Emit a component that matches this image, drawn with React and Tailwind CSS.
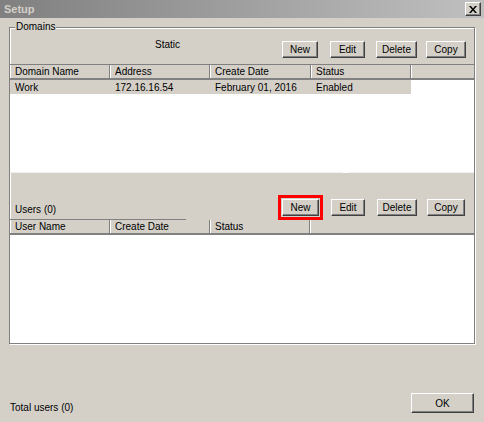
// Диалог "Setup": домены и пользователи, классический вид Windows.
const domainCols = [
  { label: 'Domain Name', w: 'w-[100px]' },
  { label: 'Address', w: 'w-[100px]' },
  { label: 'Create Date', w: 'w-[101px]' },
  { label: 'Status', w: 'w-[100px]' },
]

const userCols = [
  { label: 'User Name', w: 'w-[100px]' },
  { label: 'Create Date', w: 'w-[100px]' },
  { label: 'Status', w: 'w-[100px]' },
]

const domainRow = ['Work', '172.16.16.54', 'February 01, 2016', 'Enabled']

export default function App() {
  return (
    <div
      className="flex h-[422px] w-[484px] flex-col bg-[#d4d0c8] text-[10px] text-black"
      style={{ fontFamily: '"Liberation Sans", Arial, sans-serif' }}
    >
      <div className="flex h-[18px] shrink-0 items-center justify-between bg-gradient-to-r from-[#808080] to-[#c0c0c0] pl-[4px] pr-[3px]">
        <span className="text-[11px] font-bold text-[#d4d0c8]">Setup</span>
        <button className="flex h-[14px] w-[16px] items-center justify-center border border-t-white border-l-white border-r-[#404040] border-b-[#404040] bg-[#d4d0c8] shadow-[inset_-1px_-1px_0_#808080]">
          <svg width="8" height="7" viewBox="0 0 8 7">
            <path d="M0 0h2l2 2.5L6 0h2L5 3.5 8 7H6L4 4.5 2 7H0l3-3.5z" fill="#000" />
          </svg>
        </button>
      </div>

      <div className="flex flex-1 flex-col px-[9px] pt-[9px]">
        <div className="relative h-[317px] border border-[#808080] shadow-[1px_1px_0_#fff,inset_1px_1px_0_#fff]">
          <span className="absolute top-[-7px] left-[5px] bg-[#d4d0c8] px-[1px] leading-[12px]">
            Domains
          </span>

          <div className="flex h-[35px] items-end pb-[5px]">
            <span className="mb-[6px] ml-[145px] w-[120px]">Static</span>
            <div className="ml-[7px] flex gap-[12px]">
              <Btn w="w-[36px]">New</Btn>
              <Btn w="w-[35px]">Edit</Btn>
              <div className="ml-[-1px]">
                <Btn w="w-[41px]">Delete</Btn>
              </div>
              <div className="ml-[-3px]">
                <Btn w="w-[40px]">Copy</Btn>
              </div>
            </div>
          </div>

          <div className="mt-[1px] flex h-[108px] flex-col border-t border-[#808080] bg-white">
            <Header cols={domainCols} />
            <div className="flex h-[14px] w-[401px] items-center bg-[#d4d0c8]">
              {domainRow.map((v, i) => (
                <span key={v} className={`${domainCols[i].w} pl-[5px]`}>
                  {v}
                </span>
              ))}
            </div>
          </div>

          <div className="relative flex h-[48px] items-end border-t border-[#f0f0f0]">
            <span className="absolute top-[-2px] left-[332px] h-[2px] w-[6px] bg-white" />
            <div className="w-[176px] border-b border-[#808080] pb-[2px] pl-[5px]">Users (0)</div>
            <div className="mb-[4px] ml-[96px] flex gap-[12px]">
              <div className="outline outline-[3px] outline-offset-[1px] outline-[#ff0000]">
                <Btn w="w-[37px]">New</Btn>
              </div>
              <Btn w="w-[34px]">Edit</Btn>
              <Btn w="w-[40px]">Delete</Btn>
              <div className="ml-[-2px]">
                <Btn w="w-[38px]">Copy</Btn>
              </div>
            </div>
          </div>

          <div className="flex h-[123px] flex-col bg-white">
            <Header cols={userCols} />
          </div>
        </div>

        <div className="mt-auto flex items-end justify-between pb-[9px]">
          <span className="pl-[1px] leading-[10px]">Total users (0)</span>
          <button className="mr-[1px] h-[20px] w-[63px] border border-t-white border-l-white border-r-[#404040] border-b-[#404040] bg-[#d4d0c8] shadow-[inset_-1px_-1px_0_#808080]">
            OK
          </button>
        </div>
      </div>
    </div>
  )
}

function Header({ cols }) {
  return (
    <div className="flex h-[15px] shrink-0 border-b-2 border-[#808080] bg-[#d4d0c8]">
      {cols.map((c) => (
        <div
          key={c.label}
          className={`${c.w} flex items-center border-r border-[#808080] pl-[5px] shadow-[inset_1px_0_0_#fff]`}
        >
          {c.label}
        </div>
      ))}
      <div className="flex-1 shadow-[inset_1px_0_0_#fff]" />
    </div>
  )
}

function Btn({ w, children }) {
  return (
    <button
      className={`${w} flex h-[17px] items-center justify-center border border-t-white border-l-white border-r-[#404040] border-b-[#404040] bg-[#d4d0c8] shadow-[inset_-1px_-1px_0_#808080]`}
    >
      {children}
    </button>
  )
}
